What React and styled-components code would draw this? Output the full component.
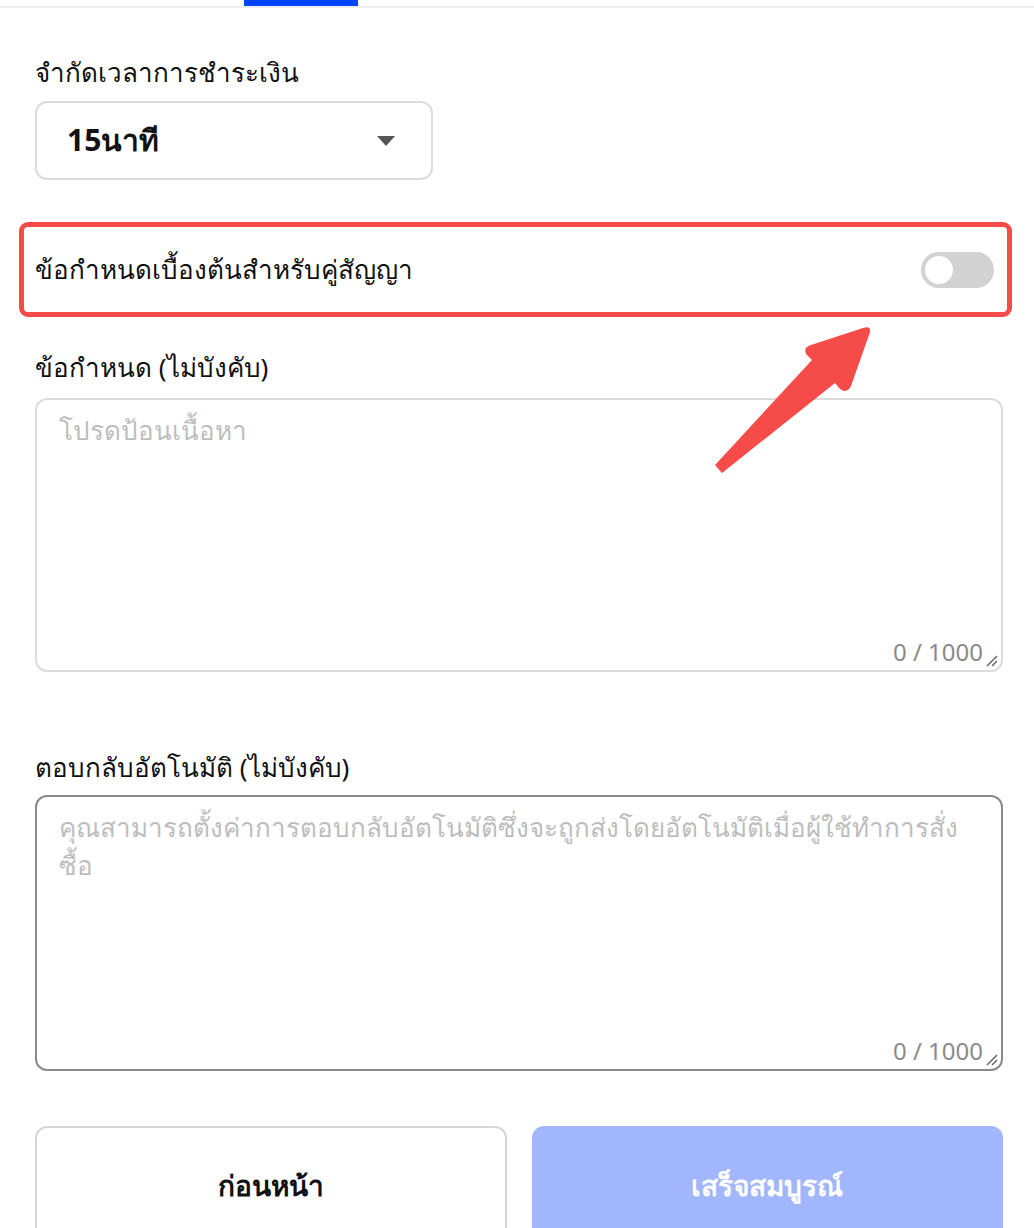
import React from 'react'
import styled, { createGlobalStyle } from 'styled-components'

const GlobalStyle = createGlobalStyle`
  body {
    margin: 0;
    background: #fff;
    font-family: "Noto Sans", "Liberation Sans", sans-serif;
    color: #111;
  }
`

const Page = styled.div`
  position: relative;
  width: 1034px;
  min-height: 1228px;
  overflow: hidden;
`

const TabBar = styled.div`
  position: relative;
  height: 6px;
  border-bottom: 2px solid #eeeeee;
`

const TabIndicator = styled.div`
  position: absolute;
  left: 244px;
  top: 0;
  width: 114px;
  height: 6px;
  background: #0044ff;
`

const Form = styled.div`
  padding: 0 31px 0 35px;
  display: flex;
  flex-direction: column;
`

const Label = styled.div`
  font-size: 26px;
  line-height: 36px;
  margin-top: ${p => p.$top}px;
  margin-bottom: ${p => p.$bottom}px;
`

const Select = styled.div`
  width: 398px;
  height: 79px;
  box-sizing: border-box;
  border: 2px solid #dcdcdc;
  border-radius: 12px;
  display: flex;
  align-items: center;
  justify-content: space-between;
  padding: 0 36px 0 30px;
  font-size: 30px;
  font-weight: 700;
`

const Caret = styled.span`
  width: 0;
  height: 0;
  border-left: 9px solid transparent;
  border-right: 9px solid transparent;
  border-top: 10px solid #555;
`

const HighlightRow = styled.div`
  margin: 42px -9px 0 -16px;
  height: 95px;
  box-sizing: border-box;
  border: 5px solid #f54c4a;
  border-radius: 9px;
  display: flex;
  align-items: center;
  justify-content: space-between;
  padding: 0 13px 0 11px;
  font-size: 26px;
`

const Toggle = styled.div`
  position: relative;
  width: 73px;
  height: 36px;
  border-radius: 18px;
  background: #d2d2d2;
  &::after {
    content: '';
    position: absolute;
    left: 4px;
    top: 4px;
    width: 28px;
    height: 28px;
    border-radius: 50%;
    background: #fff;
  }
`

const TextArea = styled.div`
  position: relative;
  height: ${p => p.$height}px;
  box-sizing: border-box;
  border: 2px solid ${p => (p.$focused ? '#8a8a8a' : '#dcdcdc')};
  border-radius: 12px;
  padding: 11px 22px;
`

const Placeholder = styled.div`
  font-size: 26px;
  line-height: 38px;
  color: #bdbdbd;
`

const Counter = styled.div`
  position: absolute;
  right: 18px;
  bottom: 2px;
  font-size: 24px;
  color: #8a8a8a;
`

const Grip = styled.svg`
  position: absolute;
  right: 2px;
  bottom: 2px;
`

const Buttons = styled.div`
  display: grid;
  grid-template-columns: 1fr 1fr;
  gap: 25px;
  margin-top: 55px;
`

const Button = styled.div`
  height: 120px;
  box-sizing: border-box;
  border-radius: 12px;
  display: flex;
  align-items: center;
  justify-content: center;
  font-size: 28px;
  font-weight: 700;
  border: 2px solid ${p => (p.$primary ? '#a1b6fd' : '#d6d6d6')};
  background: ${p => (p.$primary ? '#a1b6fd' : '#fff')};
  color: ${p => (p.$primary ? '#fff' : '#111')};
`

const Arrow = styled.svg`
  position: absolute;
  left: 700px;
  top: 320px;
`

const ResizeGrip = () => (
  <Grip width="16" height="16" viewBox="0 0 16 16">
    <path d="M14 4 L4 14 M14 9 L9 14" stroke="#666" strokeWidth="1.5" />
  </Grip>
)

export default function App() {
  return (
    <Page>
      <GlobalStyle />
      <TabBar>
        <TabIndicator />
      </TabBar>
      <Form>
        <Label $top={46} $bottom={11}>จำกัดเวลาการชำระเงิน</Label>
        <Select>
          <span>15นาที</span>
          <Caret />
        </Select>
        <HighlightRow>
          <span>ข้อกำหนดเบื้องต้นสำหรับคู่สัญญา</span>
          <Toggle />
        </HighlightRow>
        <Label $top={32} $bottom={13}>ข้อกำหนด (ไม่บังคับ)</Label>
        <TextArea $height={274}>
          <Placeholder>โปรดป้อนเนื้อหา</Placeholder>
          <Counter>0 / 1000</Counter>
          <ResizeGrip />
        </TextArea>
        <Label $top={77} $bottom={10}>ตอบกลับอัตโนมัติ (ไม่บังคับ)</Label>
        <TextArea $height={276} $focused>
          <Placeholder>คุณสามารถตั้งค่าการตอบกลับอัตโนมัติซึ่งจะถูกส่งโดยอัตโนมัติเมื่อผู้ใช้ทำการสั่งซื้อ</Placeholder>
          <Counter>0 / 1000</Counter>
          <ResizeGrip />
        </TextArea>
        <Buttons>
          <Button>ก่อนหน้า</Button>
          <Button $primary>เสร็จสมบูรณ์</Button>
        </Buttons>
      </Form>
      <Arrow width="180" height="160" viewBox="0 0 180 160">
        <path
          d="M15 145 L112 40 L107 35 Q102 28 111 25 L163 8 Q173 5 169 15 L151 66 Q147 74 140 69 L135 63 L22 153 Z"
          fill="#f54c4a"
        />
      </Arrow>
    </Page>
  )
}
